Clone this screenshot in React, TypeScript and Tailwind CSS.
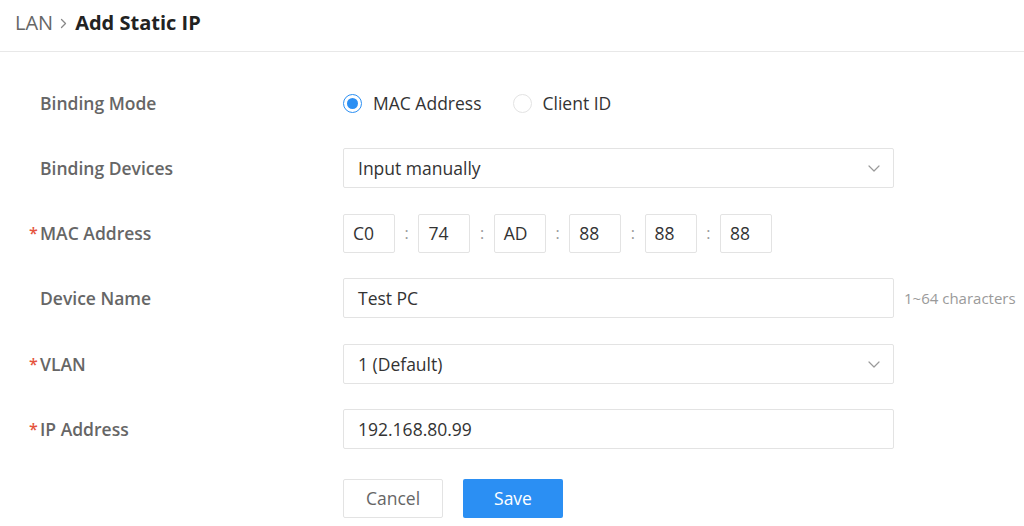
import React from "react";

const Chevron = () => (
  <svg width="12" height="7" viewBox="0 0 12 7" fill="none">
    <path d="M1 1l5 5 5-5" stroke="#9a9a9a" strokeWidth="1.2" strokeLinecap="round" strokeLinejoin="round" />
  </svg>
);

function Label({ text, req }: { text: string; req?: boolean }) {
  return (
    <div className="flex w-[343px] shrink-0 items-center pl-[29px]">
      <span className="w-[11px] text-[16px] font-semibold leading-none text-[#e5533d]">{req ? "*" : ""}</span>
      <span className="text-[17.5px] font-semibold text-[#666666]">{text}</span>
    </div>
  );
}

function Row({ children, className = "" }: { children: React.ReactNode; className?: string }) {
  return <div className={`flex h-[40px] items-center ${className}`}>{children}</div>;
}

function Box({ children, select }: { children: React.ReactNode; select?: boolean }) {
  return (
    <div className="flex h-[40px] w-[551px] items-center justify-between rounded-[2px] border border-[#e3e3e3] bg-white pl-[14px] pr-[13px] text-[17.5px] text-[#333333]">
      <span>{children}</span>
      {select ? <Chevron /> : null}
    </div>
  );
}

export default function App() {
  const mac = ["C0", "74", "AD", "88", "88", "88"];
  return (
    <div className="h-[526px] w-[1024px] overflow-hidden bg-white" style={{ fontFamily: '"Open Sans", "Liberation Sans", sans-serif' }}>
      <div className="flex h-[52px] items-center border-b border-[#e8e8e8] pl-[15px] pb-[5px]">
        <span className="text-[20px] text-[#666666]">LAN</span>
        <svg className="ml-[7px] mr-[8px]" width="7" height="11" viewBox="0 0 7 11" fill="none">
          <path d="M1.5 1.5l4 4-4 4" stroke="#888" strokeWidth="1.3" strokeLinecap="round" strokeLinejoin="round" />
        </svg>
        <span className="text-[20px] font-bold text-[#222222]">Add Static IP</span>
      </div>

      <div className="flex flex-col gap-[25px] pt-[31px]">
        <Row>
          <Label text="Binding Mode" />
          <div className="flex items-center text-[17.5px] text-[#333333]">
            <span className="flex h-[19px] w-[19px] items-center justify-center rounded-full border border-[#2b8ff3]">
              <span className="h-[11px] w-[11px] rounded-full bg-[#2b8ff3]" />
            </span>
            <span className="ml-[11px]">MAC Address</span>
            <span className="ml-[31px] h-[19px] w-[19px] rounded-full border border-[#e3e3e3]" />
            <span className="ml-[11px]">Client ID</span>
          </div>
        </Row>
        <Row>
          <Label text="Binding Devices" />
          <Box select>Input manually</Box>
        </Row>
        <Row>
          <Label text="MAC Address" req />
          <div className="flex items-center">
            {mac.map((m, i) => (
              <React.Fragment key={i}>
                {i > 0 && <span className="w-[23.4px] text-center text-[16px] text-[#999999]">:</span>}
                <div className="flex h-[39px] w-[52px] items-center rounded-[2px] border border-[#e3e3e3] pl-[9px] text-[17.5px] text-[#333333]">
                  {m}
                </div>
              </React.Fragment>
            ))}
          </div>
        </Row>
        <Row>
          <Label text="Device Name" />
          <Box>Test PC</Box>
          <span className="ml-[10px] text-[15px] text-[#9a9a9a]">1~64 characters</span>
        </Row>
        <Row className="mt-[1px]">
          <Label text="VLAN" req />
          <Box select>1 (Default)</Box>
        </Row>
        <Row>
          <Label text="IP Address" req />
          <Box>192.168.80.99</Box>
        </Row>
        <div className="mt-[5px] flex items-center pl-[343px]">
          <button className="h-[39px] w-[100px] rounded-[2px] border border-[#e3e3e3] bg-white text-[17.5px] text-[#666666]">Cancel</button>
          <button className="ml-[20px] h-[39px] w-[100px] rounded-[2px] bg-[#2b8ff3] text-[17.5px] text-white">Save</button>
        </div>
      </div>
    </div>
  );
}
